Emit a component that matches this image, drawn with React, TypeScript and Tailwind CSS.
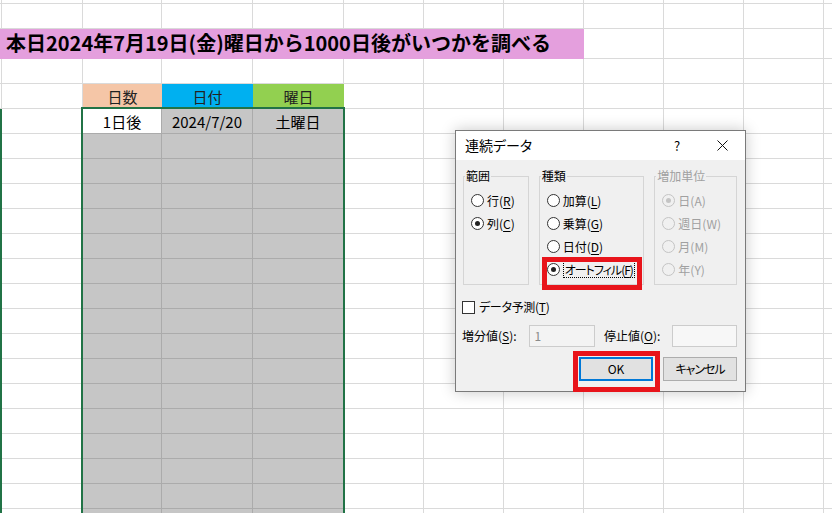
import React from 'react';

const COLS = 12;
const BODY_ROWS = 17;

const Cell = ({ className = '', children }: { className?: string; children?: React.ReactNode }) => (
  <div className={`flex items-center justify-center leading-none border-r border-b border-[#dadada] ${className}`}>
    {children}
  </div>
);

const Accel = ({ text, k, disabled }: { text: string; k: string; disabled?: boolean }) => (
  <span className="whitespace-nowrap">
    {text}(
    <span className={disabled ? '' : 'underline underline-offset-2'}>{k}</span>)
  </span>
);

const Radio = ({ checked, disabled }: { checked?: boolean; disabled?: boolean }) => (
  <span
    className={`w-[13px] h-[13px] shrink-0 rounded-full border flex items-center justify-center ${
      disabled ? 'border-[#c4c4c4] bg-[#f0f0f0]' : 'border-[#333333] bg-white'
    }`}
  >
    {checked && <span className={`w-[5px] h-[5px] rounded-full ${disabled ? 'bg-[#c4c4c4]' : 'bg-[#222222]'}`} />}
  </span>
);

type Opt = { text: string; k: string; checked?: boolean; focus?: boolean };

const Group = ({ title, width, options, disabled }: { title: string; width: string; options: Opt[]; disabled?: boolean }) => (
  <fieldset className={`${width} h-[117px] border border-[#d5d5d5] m-0 p-0`}>
    <legend className={`ml-[1px] px-[1px] leading-[16px] ${disabled ? 'text-[#a0a0a0]' : ''}`}>{title}</legend>
    <div className="flex flex-col pl-[7px] pt-[5px]">
      {options.map((o, i) => (
        <div key={i} className={`h-[23px] flex items-center gap-[3px] whitespace-nowrap ${disabled ? 'text-[#a0a0a0]' : ''}`}>
          <Radio checked={o.checked} disabled={disabled} />
          {o.focus ? (
            <span className="border border-dotted border-black px-[1px] leading-[15px] whitespace-nowrap tracking-[-1px]">
              <Accel text={o.text} k={o.k} />
            </span>
          ) : (
            <span className="leading-[15px] whitespace-nowrap">
              <Accel text={o.text} k={o.k} disabled={disabled} />
            </span>
          )}
        </div>
      ))}
    </div>
  </fieldset>
);

const Dialog = () => (
  <div className="absolute left-[455px] top-[130px] w-[291px] h-[262px] border border-[#7a7a7a] bg-[#f0f0f0] shadow-[0_0_14px_rgba(0,0,0,0.22)] flex flex-col text-[12px] text-black [font-feature-settings:'palt']">
    <div className="h-[29px] bg-white flex items-center pl-[9px] pr-[13px] shrink-0">
      <span className="flex-1 text-[14px]">連続データ</span>
      <span className="w-[20px] text-center text-[13px]">?</span>
      <span className="w-[20px] ml-[25px] flex justify-center">
        <svg width="11" height="11" viewBox="0 0 11 11">
          <path d="M0.5 0.5 L10.5 10.5 M10.5 0.5 L0.5 10.5" stroke="#111" strokeWidth="1" />
        </svg>
      </span>
    </div>
    <div className="flex-1 flex flex-col pl-[7px] pr-[8px] pt-[8px]">
      <div className="flex gap-[10px]">
        <Group
          title="範囲"
          width="w-[66px]"
          options={[
            { text: '行', k: 'R' },
            { text: '列', k: 'C', checked: true },
          ]}
        />
        <Group
          title="種類"
          width="w-[106px]"
          options={[
            { text: '加算', k: 'L' },
            { text: '乗算', k: 'G' },
            { text: '日付', k: 'D' },
            { text: 'オートフィル', k: 'F', checked: true, focus: true },
          ]}
        />
        <Group
          title="増加単位"
          width="w-[83px]"
          disabled
          options={[
            { text: '日', k: 'A', checked: true },
            { text: '週日', k: 'W' },
            { text: '月', k: 'M' },
            { text: '年', k: 'Y' },
          ]}
        />
      </div>
      <div className="mt-[13px] h-[18px] flex items-center gap-[4px] -ml-[1px] tracking-[-0.3px]">
        <span className="w-[13px] h-[13px] border border-[#333333] bg-white" />
        <Accel text="データ予測" k="T" />
      </div>
      <div className="mt-[9px] flex items-center -ml-[1px] whitespace-nowrap">
        <span className="w-[68px]">
          増分値(<span className="underline underline-offset-2">S</span>):
        </span>
        <span className="w-[66px] h-[22px] border border-[#cccccc] bg-[#f3f3f3] text-[#8a8a8a] flex items-center pl-[4px]">1</span>
        <span className="w-[69px] ml-[9px]">
          停止値(<span className="underline underline-offset-2">O</span>):
        </span>
        <span className="w-[65px] h-[22px] border border-[#cccccc] bg-[#f7f7f7]" />
      </div>
      <div className="mt-[10px] flex justify-end gap-[10px]">
        <button className="w-[74px] h-[24px] border-2 border-[#0078d7] bg-[#e1e1e1] text-[12px]">OK</button>
        <button className="w-[74px] h-[24px] border border-[#adadad] bg-[#e1e1e1] text-[12px] tracking-[-1px]">キャンセル</button>
      </div>
    </div>
  </div>
);

export default function App() {
  const plain = (n: number, key: string) =>
    Array.from({ length: n }, (_, i) => <Cell key={`${key}-${i}`} />);

  return (
    <div className="relative w-[832px] h-[513px] overflow-hidden bg-white text-black font-['Noto_Sans_CJK_JP',sans-serif]">
      <div className="grid grid-cols-[2px_81px_79px_91px_91px_80px_80px_80px_80px_80px_80px_80px] grid-rows-[4px_25px_30px_25px_25px] auto-rows-[25px] text-[15px]">
        {plain(COLS, 'r0')}
        {plain(COLS, 'r1')}
        <div className="col-span-8 bg-[#e49fdd] flex items-center pl-[6px] pb-[2px] text-[20px] font-bold leading-none whitespace-nowrap">
          本日2024年7月19日(金)曜日から1000日後がいつかを調べる
        </div>
        {plain(4, 'r2')}
        {plain(COLS, 'r3')}
        <Cell />
        <Cell />
        <div className="bg-[#f5c6a7] flex items-center justify-center leading-none text-[#222]">日数</div>
        <div className="bg-[#00b0f0] flex items-center justify-center leading-none text-[#222]">日付</div>
        <div className="bg-[#92d050] flex items-center justify-center leading-none text-[#222]">曜日</div>
        {plain(7, 'r4')}
        {Array.from({ length: BODY_ROWS }, (_, r) => (
          <React.Fragment key={r}>
            <div className="bg-[#217346]" />
            <Cell />
            {r === 0 ? (
              <>
                <div className="bg-white flex items-center justify-center leading-none border-r border-b border-[#ababab]">1日後</div>
                <div className="bg-[#c6c6c6] flex items-center justify-center leading-none border-r border-b border-[#ababab]">2024/7/20</div>
                <div className="bg-[#c6c6c6] flex items-center justify-center leading-none border-r border-b border-[#ababab]">土曜日</div>
              </>
            ) : (
              <>
                <div className="bg-[#c6c6c6] border-r border-b border-[#ababab]" />
                <div className="bg-[#c6c6c6] border-r border-b border-[#ababab]" />
                <div className="bg-[#c6c6c6] border-r border-b border-[#ababab]" />
              </>
            )}
            {plain(7, `b${r}`)}
          </React.Fragment>
        ))}
      </div>

      {/* selection frame */}
      <div className="absolute left-[81px] top-[107px] w-[264px] h-[440px] border-2 border-[#217346]" />

      <Dialog />

      {/* red annotation boxes */}
      <div className="absolute left-[542px] top-[257px] w-[100px] h-[33px] border-[5px] border-[#e8141b]" />
      <div className="absolute left-[573px] top-[351px] w-[87px] h-[41px] border-[5px] border-[#e8141b]" />
    </div>
  );
}
